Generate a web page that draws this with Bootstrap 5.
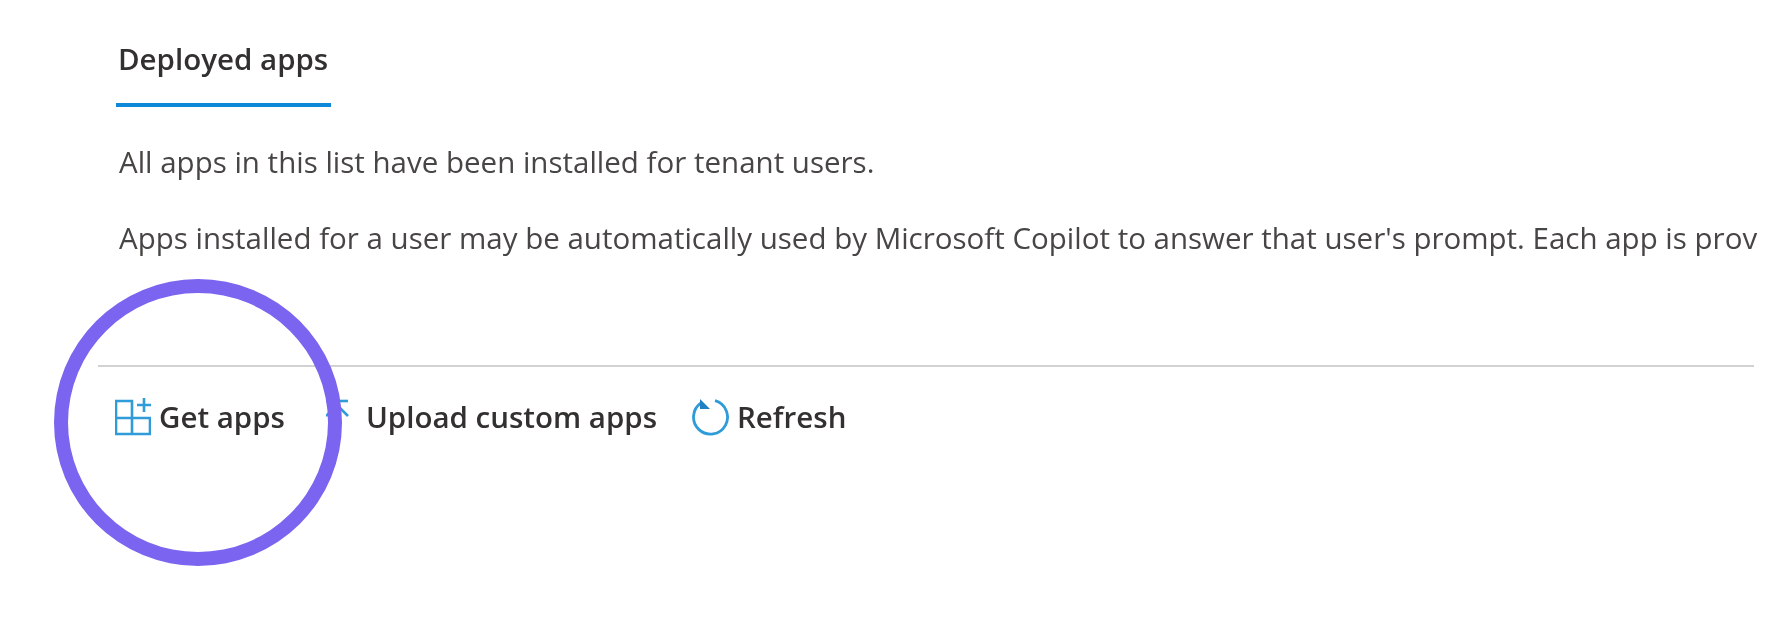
<!DOCTYPE html>
<html lang="en">
<head>
  <meta charset="UTF-8" />
  <title>Deployed apps</title>
  <link href="https://cdn.jsdelivr.net/npm/bootstrap@5.3.3/dist/css/bootstrap.min.css" rel="stylesheet" />
  <style>
    html, body {
      height: 620px;
      overflow: hidden;
      background: #fff;
    }
    .page-wrap {
      position: relative;
      height: 620px;
      padding: 0 18px 0 98px;
      font-family: "Open Sans", "Liberation Sans", sans-serif;
      color: #3b3a39;
      filter: blur(.5px);
    }
    .tab-title {
      display: inline-block;
      margin: 38px 0 0 18px;
      padding: 0 3px 24px 2px;
      border-bottom: 4px solid #0f88d8;
      font-size: 29.5px;
      line-height: 41px;
      font-weight: 600;
      color: #323130;
    }
    .intro-line {
      margin: 0 0 0 21px;
      font-size: 29.5px;
      line-height: 41px;
      white-space: nowrap;
      color: #484644;
    }
    .intro-first { margin-top: 34px; }
    .intro-second { margin-top: 35px; }
    .cmd-bar {
      margin-top: 107px;
      padding: 29px 0 0 17px;
      border-top: 2px solid #d2d2d2;
      font-size: 29.5px;
      line-height: 41px;
      font-weight: 600;
      color: #323130;
    }
    .cmd-item svg { flex: none; }
    .cmd-upload { margin-left: 41px; }
    .cmd-refresh { margin-left: 34px; }
    .focus-ring-mark {
      position: absolute;
      left: 54px;
      top: 279px;
      width: 288px;
      height: 287px;
      border: 14px solid #7a64f0;
      border-radius: 50%;
    }
  </style>
</head>
<body>
  <div class="page-wrap">
    <div class="tab-title">Deployed apps</div>
    <p class="intro-line intro-first">All apps in this list have been installed for tenant users.</p>
    <p class="intro-line intro-second">Apps installed for a user may be automatically used by Microsoft Copilot to answer that user's prompt. Each app is prov</p>

    <div class="cmd-bar d-flex align-items-center">
      <div class="cmd-item d-flex align-items-center">
        <svg width="36" height="38" viewBox="0 0 36 38" fill="none" stroke="#2f9bd8" stroke-width="2.6">
          <path d="M1 3H17V36H1ZM1 20H35V36H17M35 20V36"/>
          <path d="M29 0V14M22 7H36"/>
        </svg>
        <span class="ms-2">Get apps</span>
      </div>
      <div class="cmd-item cmd-upload d-flex align-items-center">
        <svg width="36" height="38" viewBox="0 0 36 38" fill="none" stroke="#2f9bd8" stroke-width="2.6">
          <path d="M0 3H22"/>
          <path d="M0 18 11 7 22 18M11 7V36"/>
        </svg>
        <span class="ms-1">Upload custom apps</span>
      </div>
      <div class="cmd-item cmd-refresh d-flex align-items-center">
        <svg width="38" height="38" viewBox="0 0 38 38" fill="none" stroke="#2f9bd8" stroke-width="2.8">
          <path d="M10 5A17 17 0 1 0 24 2.7"/>
          <path d="M9 1v10h10z" fill="#1f80c4" stroke="none"/>
        </svg>
        <span class="ms-2">Refresh</span>
      </div>
    </div>

    <div class="focus-ring-mark"></div>
  </div>
  <script src="https://cdn.jsdelivr.net/npm/bootstrap@5.3.3/dist/js/bootstrap.bundle.min.js"></script>
</body>
</html>
